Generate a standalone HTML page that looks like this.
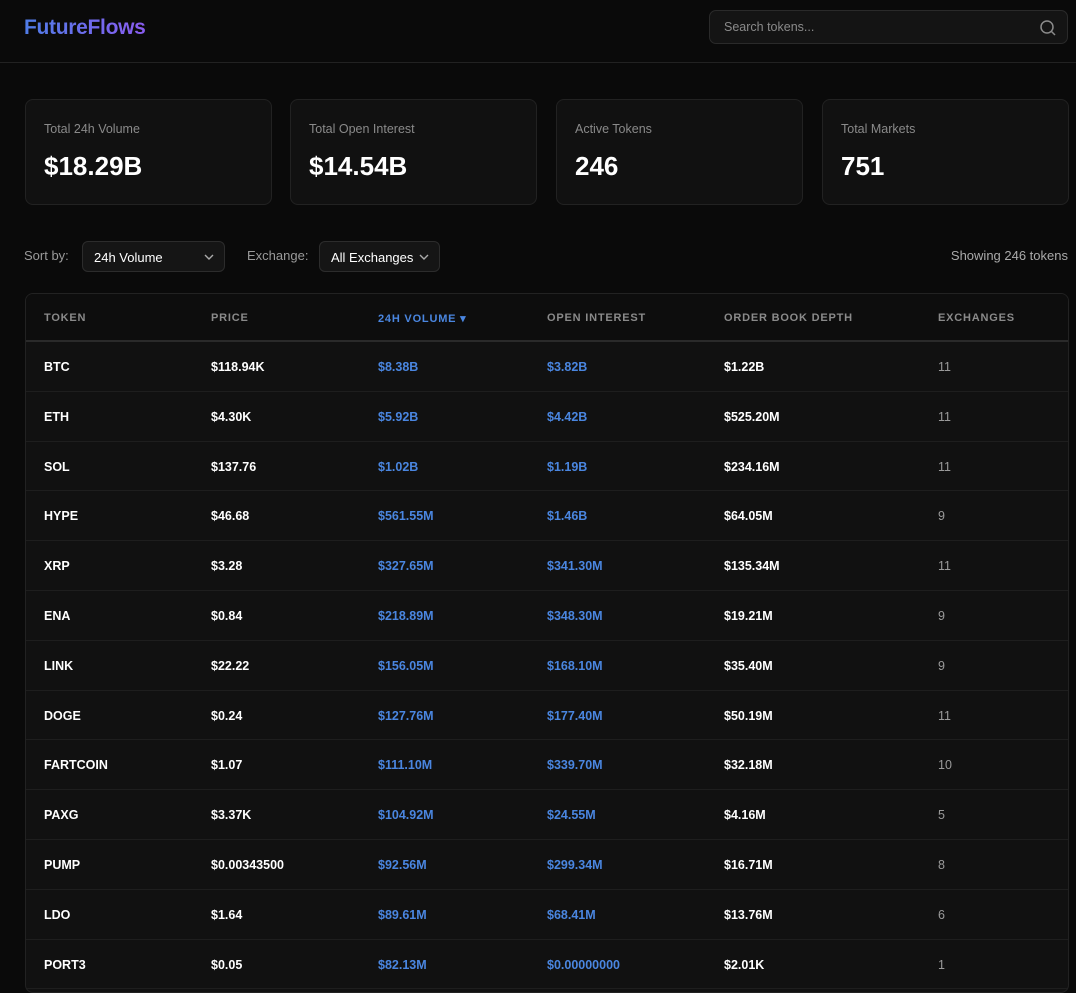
<!DOCTYPE html>
<html><head><meta charset="utf-8"><style>
*{margin:0;padding:0;box-sizing:border-box}
body{width:1076px;height:979px;overflow:hidden;background:#0a0a0a;font-family:"Liberation Sans",Arial,sans-serif;color:#fff}
.hdr{height:63px;border-bottom:1px solid #222;position:relative}
.logo{position:absolute;left:24px;top:16px;font-size:21px;font-weight:bold;background:linear-gradient(90deg,#4f7de8,#8a5cf0);-webkit-background-clip:text;color:transparent;letter-spacing:-0.3px}
.search{position:absolute;left:709px;top:10px;width:359px;height:34px;border:1px solid #2a2a2a;border-radius:7px;background:#141414;font-size:12.5px;color:#8a8a8a;padding:9px 14px}
.search svg{position:absolute;right:10px;top:8px}
.card{position:absolute;top:99px;width:247px;height:106px;border:1px solid #222;border-radius:8px;background:#111}
.card .l{position:absolute;left:18px;top:22px;font-size:12.5px;color:#8a8a8a}
.card .v{position:absolute;left:18px;top:51px;font-size:26px;font-weight:bold}
.lab{position:absolute;top:248px;font-size:13px;color:#9a9a9a}
.sel{position:absolute;top:241px;height:31px;border:1px solid #2c2c2c;border-radius:6px;background:#151515;font-size:13px;padding:8px 11px}
.sel svg{position:absolute;right:10px;top:11px}
.tbl{position:absolute;left:25px;top:293px;width:1044px;height:700px;border:1px solid #222;border-radius:8px;background:#111;overflow:hidden}
.th{height:48px;background:#0d0d0d;border-bottom:2px solid #2a2a2a;position:relative;font-size:11px;font-weight:bold;color:#8a8a8a;letter-spacing:0.8px}
.th span,.row span{position:absolute}
.th span{top:18px}
.row{height:49.8px;border-bottom:1px solid #1e1e1e;position:relative;font-size:12.5px;font-weight:bold}
.row span{top:18px}
.b{color:#4a86e0}
.g{color:#9a9a9a;font-weight:normal}
</style></head><body>
<div class="hdr"><div class="logo">FutureFlows</div>
<div class="search">Search tokens...<svg width="18" height="18" viewBox="0 0 18 18" fill="none" stroke="#8a8a8a" stroke-width="1.5"><circle cx="8" cy="8" r="6"/><path d="M12.5 12.5L16 16"/></svg></div></div>
<div class="card" style="left:25px"><div class="l">Total 24h Volume</div><div class="v">$18.29B</div></div>
<div class="card" style="left:290px"><div class="l">Total Open Interest</div><div class="v">$14.54B</div></div>
<div class="card" style="left:556px"><div class="l">Active Tokens</div><div class="v">246</div></div>
<div class="card" style="left:822px"><div class="l">Total Markets</div><div class="v">751</div></div>
<div class="lab" style="left:24px">Sort by:</div>
<div class="sel" style="left:82px;width:143px">24h Volume<svg width="10" height="8" viewBox="0 0 10 8" fill="none" stroke="#aaa" stroke-width="1.4"><path d="M1 2l4 4 4-4"/></svg></div>
<div class="lab" style="left:247px">Exchange:</div>
<div class="sel" style="left:319px;width:121px">All Exchanges<svg width="10" height="8" viewBox="0 0 10 8" fill="none" stroke="#aaa" stroke-width="1.4"><path d="M1 2l4 4 4-4"/></svg></div>
<div class="lab" style="right:8px;color:#aaa">Showing 246 tokens</div>
<div class="tbl">
<div class="th"><span style="left:18px">TOKEN</span><span style="left:185px">PRICE</span><span style="left:352px;color:#4a86e0">24H VOLUME ▾</span><span style="left:521px">OPEN INTEREST</span><span style="left:698px">ORDER BOOK DEPTH</span><span style="left:912px">EXCHANGES</span></div>
<div class="row"><span style="left:18px">BTC</span><span style="left:185px">$118.94K</span><span class="b" style="left:352px">$8.38B</span><span class="b" style="left:521px">$3.82B</span><span style="left:698px">$1.22B</span><span class="g" style="left:912px">11</span></div>
<div class="row"><span style="left:18px">ETH</span><span style="left:185px">$4.30K</span><span class="b" style="left:352px">$5.92B</span><span class="b" style="left:521px">$4.42B</span><span style="left:698px">$525.20M</span><span class="g" style="left:912px">11</span></div>
<div class="row"><span style="left:18px">SOL</span><span style="left:185px">$137.76</span><span class="b" style="left:352px">$1.02B</span><span class="b" style="left:521px">$1.19B</span><span style="left:698px">$234.16M</span><span class="g" style="left:912px">11</span></div>
<div class="row"><span style="left:18px">HYPE</span><span style="left:185px">$46.68</span><span class="b" style="left:352px">$561.55M</span><span class="b" style="left:521px">$1.46B</span><span style="left:698px">$64.05M</span><span class="g" style="left:912px">9</span></div>
<div class="row"><span style="left:18px">XRP</span><span style="left:185px">$3.28</span><span class="b" style="left:352px">$327.65M</span><span class="b" style="left:521px">$341.30M</span><span style="left:698px">$135.34M</span><span class="g" style="left:912px">11</span></div>
<div class="row"><span style="left:18px">ENA</span><span style="left:185px">$0.84</span><span class="b" style="left:352px">$218.89M</span><span class="b" style="left:521px">$348.30M</span><span style="left:698px">$19.21M</span><span class="g" style="left:912px">9</span></div>
<div class="row"><span style="left:18px">LINK</span><span style="left:185px">$22.22</span><span class="b" style="left:352px">$156.05M</span><span class="b" style="left:521px">$168.10M</span><span style="left:698px">$35.40M</span><span class="g" style="left:912px">9</span></div>
<div class="row"><span style="left:18px">DOGE</span><span style="left:185px">$0.24</span><span class="b" style="left:352px">$127.76M</span><span class="b" style="left:521px">$177.40M</span><span style="left:698px">$50.19M</span><span class="g" style="left:912px">11</span></div>
<div class="row"><span style="left:18px">FARTCOIN</span><span style="left:185px">$1.07</span><span class="b" style="left:352px">$111.10M</span><span class="b" style="left:521px">$339.70M</span><span style="left:698px">$32.18M</span><span class="g" style="left:912px">10</span></div>
<div class="row"><span style="left:18px">PAXG</span><span style="left:185px">$3.37K</span><span class="b" style="left:352px">$104.92M</span><span class="b" style="left:521px">$24.55M</span><span style="left:698px">$4.16M</span><span class="g" style="left:912px">5</span></div>
<div class="row"><span style="left:18px">PUMP</span><span style="left:185px">$0.00343500</span><span class="b" style="left:352px">$92.56M</span><span class="b" style="left:521px">$299.34M</span><span style="left:698px">$16.71M</span><span class="g" style="left:912px">8</span></div>
<div class="row"><span style="left:18px">LDO</span><span style="left:185px">$1.64</span><span class="b" style="left:352px">$89.61M</span><span class="b" style="left:521px">$68.41M</span><span style="left:698px">$13.76M</span><span class="g" style="left:912px">6</span></div>
<div class="row"><span style="left:18px">PORT3</span><span style="left:185px">$0.05</span><span class="b" style="left:352px">$82.13M</span><span class="b" style="left:521px">$0.00000000</span><span style="left:698px">$2.01K</span><span class="g" style="left:912px">1</span></div>
</div>
</body></html>
